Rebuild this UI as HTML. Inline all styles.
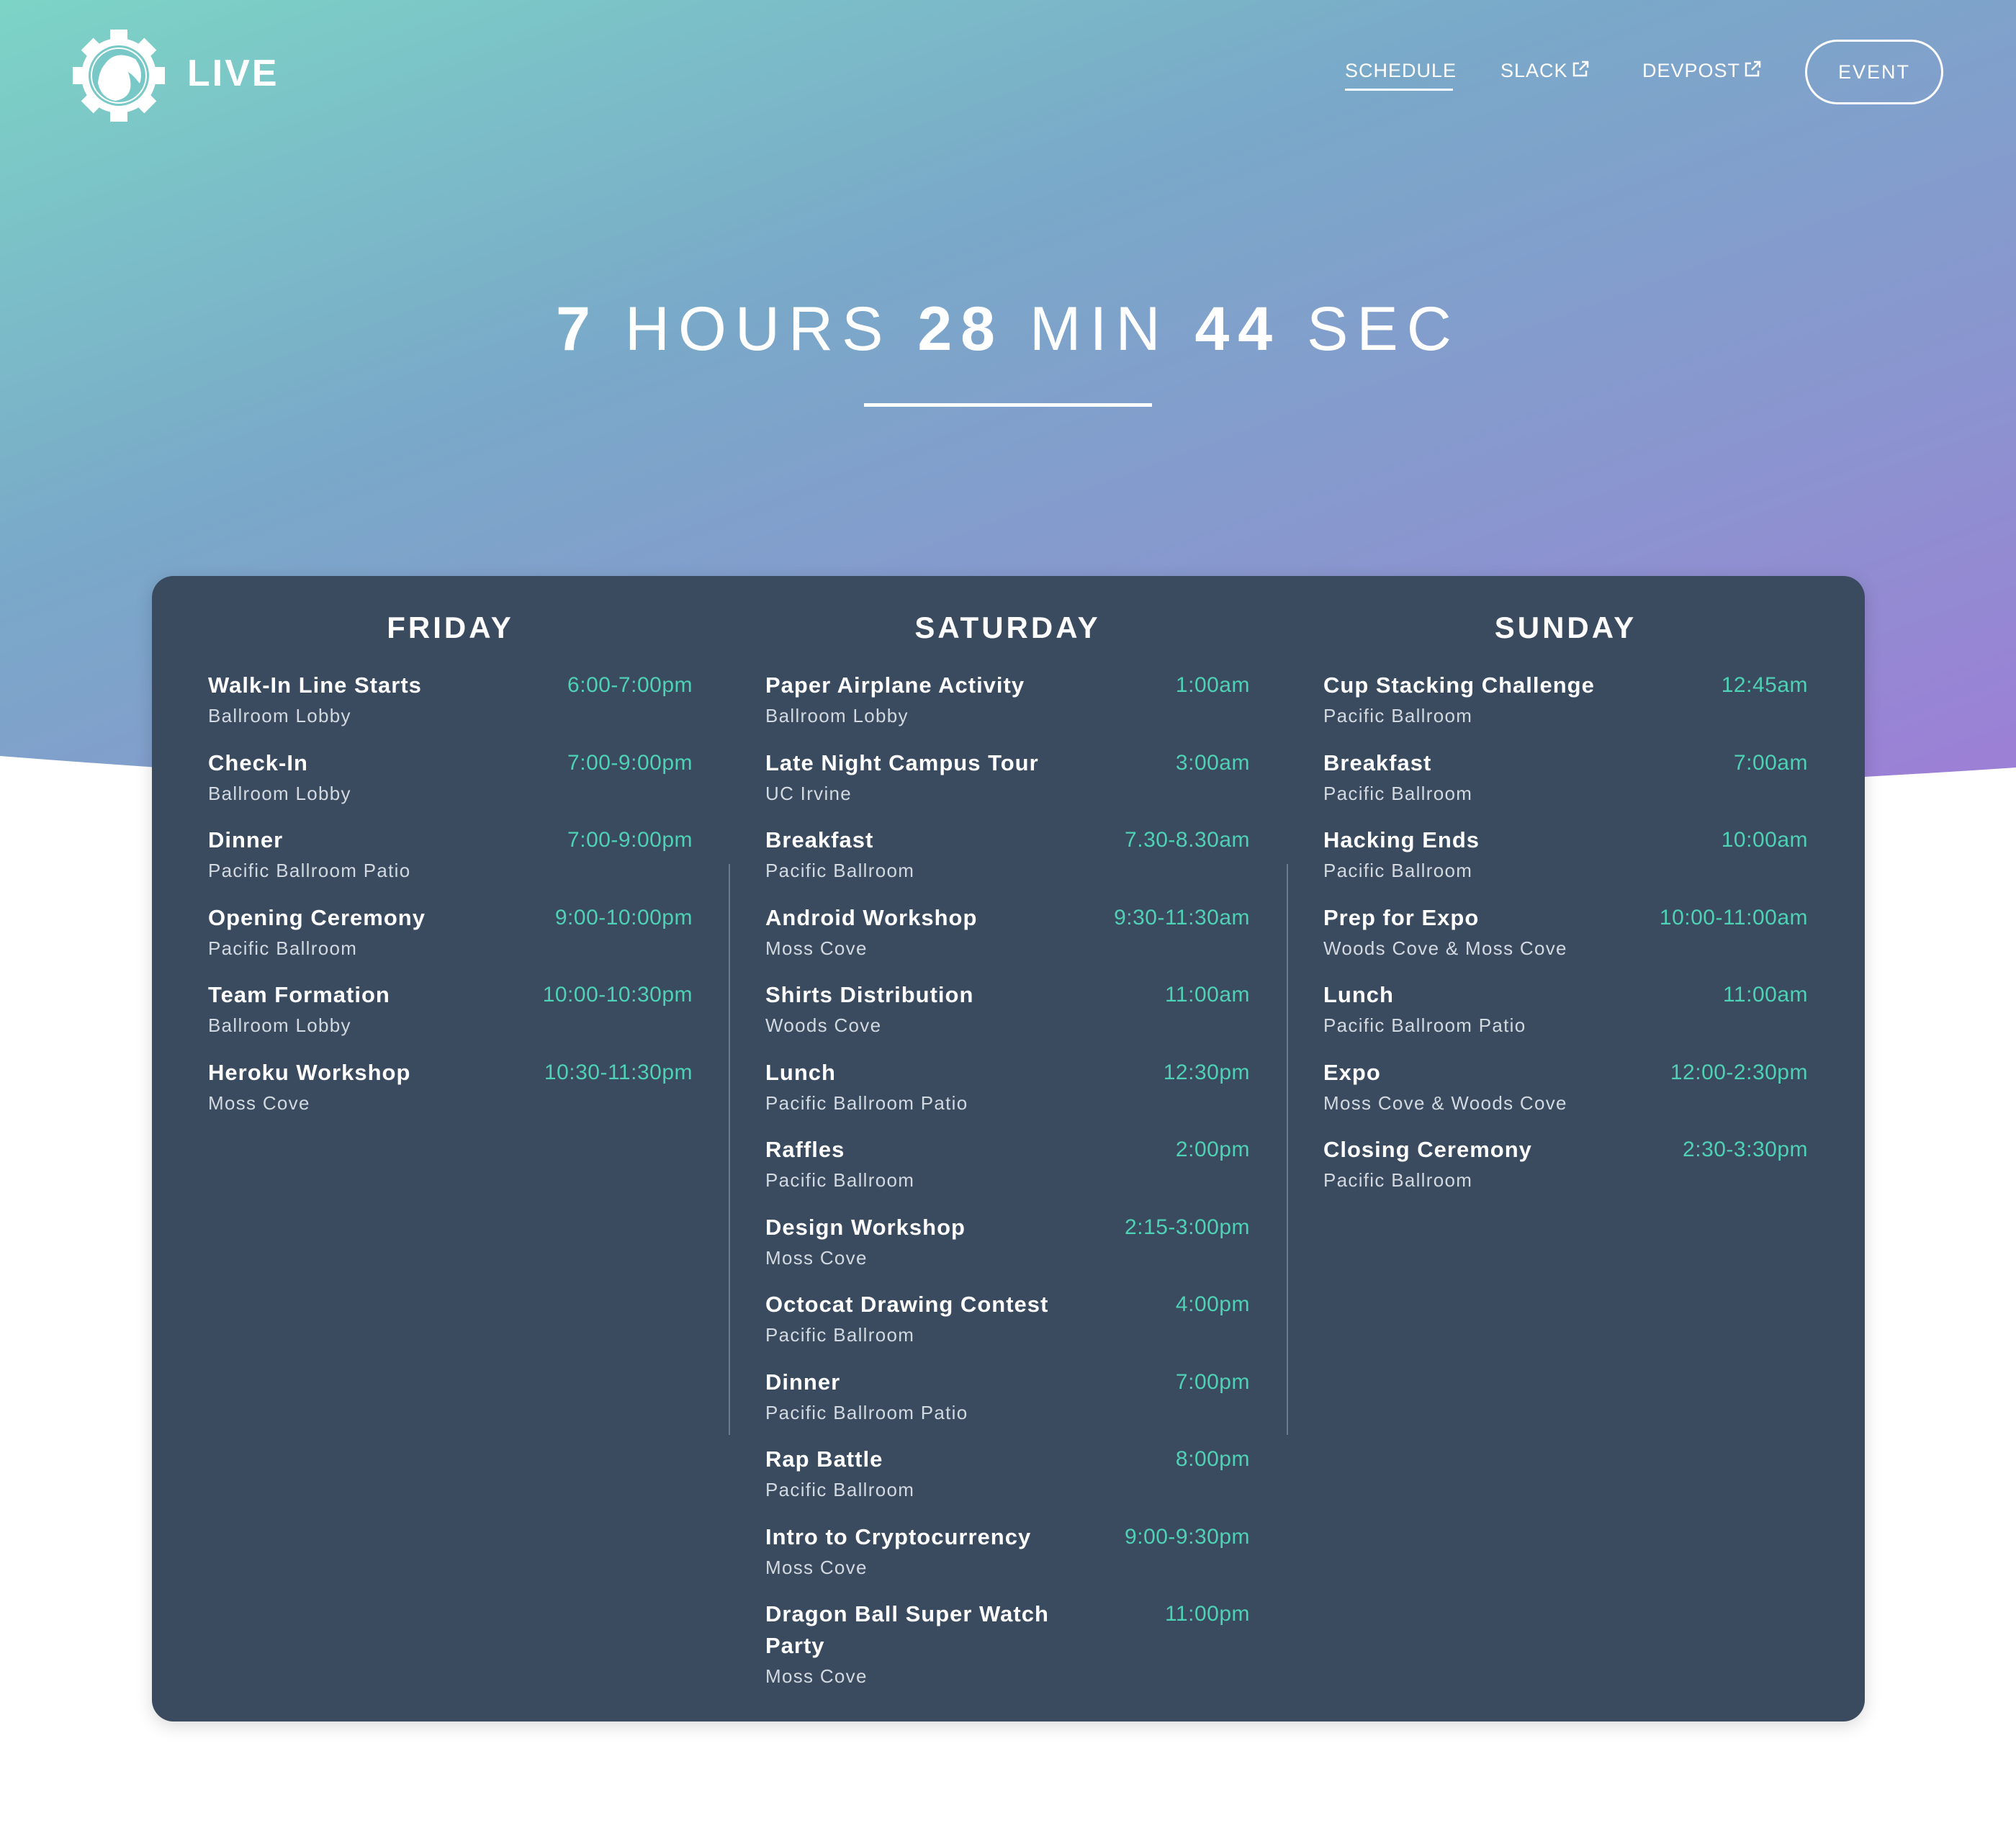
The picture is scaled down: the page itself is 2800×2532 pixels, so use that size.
<!DOCTYPE html>
<html><head><meta charset="utf-8"><style>
*{margin:0;padding:0;box-sizing:border-box}
body{width:2800px;height:2532px;position:relative;overflow:hidden;background:#fff;font-family:"Liberation Sans",sans-serif;color:#fff}
.bg{position:absolute;left:0;top:0;width:2800px;height:1300px;background:linear-gradient(160deg,#7cd4c6 0%,#7aa8c9 35%,#8a95cf 65%,#a476d9 100%)}
svg.curve{position:absolute;left:0;top:0}
.logo{position:absolute;left:100px;top:40px}
.live{position:absolute;left:260px;top:72px;font-size:52px;font-weight:bold;letter-spacing:3px;line-height:60px}
.nav{position:absolute;top:82px;font-size:27px;letter-spacing:1px;line-height:32px}
.nav svg{vertical-align:-2px;margin-left:4px}
.ul{position:absolute;left:1868px;top:123px;width:150px;height:3px;background:#fff}
.btn{position:absolute;left:2507px;top:55px;width:192px;height:90px;border:3px solid #fff;border-radius:45px;font-size:27px;letter-spacing:2px;text-align:center;line-height:84px}
.count{position:absolute;left:0;width:2800px;top:402px;text-align:center;font-size:86px;letter-spacing:12px;line-height:110px;font-weight:300}
.count b{font-weight:bold}
.hr{position:absolute;left:1200px;top:560px;width:400px;height:5px;background:#fff}
.card{position:absolute;left:211px;top:800px;width:2379px;height:1591px;background:#3a4a5f;border-radius:30px;box-shadow:0 6px 24px rgba(0,0,0,.15)}
.col{position:absolute;top:0;width:673px}
.col h2{text-align:center;font-size:42px;letter-spacing:4px;font-weight:bold;margin-top:50px;line-height:44px;height:80px}
.it{position:relative;height:107.5px}
.t{font-size:31px;font-weight:bold;letter-spacing:1px;line-height:44px;width:450px}
.l{font-size:26px;color:#d3d9e0;letter-spacing:1.3px;line-height:40px}
.tm{position:absolute;right:0;top:0;font-size:30px;color:#4fd1b5;line-height:44px;white-space:nowrap;letter-spacing:.5px}
.div{position:absolute;top:400px;width:2px;height:793px;background:#6b7a8c}
</style></head><body>
<div class="bg"></div>
<svg class="curve" width="2800" height="2532"><path d="M0 1050 Q1400 1160 2800 1066 L2800 2532 L0 2532 Z" fill="#fff"/></svg>
<svg class="logo" width="130" height="130" viewBox="0 0 130 130">
<g fill="#fff" transform="translate(65,65)">
<rect x="-12" y="-64" width="24" height="18"/><rect x="-12" y="46" width="24" height="18"/>
<rect x="-64" y="-12" width="18" height="24"/><rect x="46" y="-12" width="18" height="24"/>
<g transform="rotate(45)"><rect x="-12" y="-62" width="24" height="18"/><rect x="-12" y="44" width="24" height="18"/><rect x="-62" y="-12" width="18" height="24"/><rect x="44" y="-12" width="18" height="24"/></g>
<circle r="52"/>
</g>
<circle cx="65" cy="65" r="42" fill="#79c8c8"/>
<circle cx="65" cy="65" r="38" fill="none" stroke="#fff" stroke-width="2"/>
<path d="M45 50 Q60 28 88 42 Q100 58 94 76 Q85 64 78 60 Q90 95 60 100 Q40 96 36 75 Q38 58 45 50 Z" fill="#fff"/>
</svg>
<div class="live">LIVE</div>
<div class="nav" style="left:1868px">SCHEDULE</div><div class="ul"></div>
<div class="nav" style="left:2084px">SLACK<svg width="26" height="26" viewBox="0 0 26 26" fill="none" stroke="#fff" stroke-width="2.5"><path d="M11 5H4v17h17v-7"/><path d="M15 3h8v8M23 3L12 14"/></svg></div>
<div class="nav" style="left:2281px">DEVPOST<svg width="26" height="26" viewBox="0 0 26 26" fill="none" stroke="#fff" stroke-width="2.5"><path d="M11 5H4v17h17v-7"/><path d="M15 3h8v8M23 3L12 14"/></svg></div>
<div class="btn">EVENT</div>
<div class="count"><b>7</b> HOURS <b>28</b> MIN <b>44</b> SEC</div>
<div class="hr"></div>
<div class="card">
<div class="div" style="left:801px"></div><div class="div" style="left:1576px"></div>
<div class="col" style="left:78px"><h2>FRIDAY</h2>
<div class="it"><div class="t">Walk-In Line Starts</div><div class="l">Ballroom Lobby</div><div class="tm">6:00-7:00pm</div></div>
<div class="it"><div class="t">Check-In</div><div class="l">Ballroom Lobby</div><div class="tm">7:00-9:00pm</div></div>
<div class="it"><div class="t">Dinner</div><div class="l">Pacific Ballroom Patio</div><div class="tm">7:00-9:00pm</div></div>
<div class="it"><div class="t">Opening Ceremony</div><div class="l">Pacific Ballroom</div><div class="tm">9:00-10:00pm</div></div>
<div class="it"><div class="t">Team Formation</div><div class="l">Ballroom Lobby</div><div class="tm">10:00-10:30pm</div></div>
<div class="it"><div class="t">Heroku Workshop</div><div class="l">Moss Cove</div><div class="tm">10:30-11:30pm</div></div>
</div>
<div class="col" style="left:852px"><h2>SATURDAY</h2>
<div class="it"><div class="t">Paper Airplane Activity</div><div class="l">Ballroom Lobby</div><div class="tm">1:00am</div></div>
<div class="it"><div class="t">Late Night Campus Tour</div><div class="l">UC Irvine</div><div class="tm">3:00am</div></div>
<div class="it"><div class="t">Breakfast</div><div class="l">Pacific Ballroom</div><div class="tm">7.30-8.30am</div></div>
<div class="it"><div class="t">Android Workshop</div><div class="l">Moss Cove</div><div class="tm">9:30-11:30am</div></div>
<div class="it"><div class="t">Shirts Distribution</div><div class="l">Woods Cove</div><div class="tm">11:00am</div></div>
<div class="it"><div class="t">Lunch</div><div class="l">Pacific Ballroom Patio</div><div class="tm">12:30pm</div></div>
<div class="it"><div class="t">Raffles</div><div class="l">Pacific Ballroom</div><div class="tm">2:00pm</div></div>
<div class="it"><div class="t">Design Workshop</div><div class="l">Moss Cove</div><div class="tm">2:15-3:00pm</div></div>
<div class="it"><div class="t">Octocat Drawing Contest</div><div class="l">Pacific Ballroom</div><div class="tm">4:00pm</div></div>
<div class="it"><div class="t">Dinner</div><div class="l">Pacific Ballroom Patio</div><div class="tm">7:00pm</div></div>
<div class="it"><div class="t">Rap Battle</div><div class="l">Pacific Ballroom</div><div class="tm">8:00pm</div></div>
<div class="it"><div class="t">Intro to Cryptocurrency</div><div class="l">Moss Cove</div><div class="tm">9:00-9:30pm</div></div>
<div class="it"><div class="t" style="width:430px">Dragon Ball Super Watch Party</div><div class="l">Moss Cove</div><div class="tm">11:00pm</div></div>
</div>
<div class="col" style="left:1627px"><h2>SUNDAY</h2>
<div class="it"><div class="t">Cup Stacking Challenge</div><div class="l">Pacific Ballroom</div><div class="tm">12:45am</div></div>
<div class="it"><div class="t">Breakfast</div><div class="l">Pacific Ballroom</div><div class="tm">7:00am</div></div>
<div class="it"><div class="t">Hacking Ends</div><div class="l">Pacific Ballroom</div><div class="tm">10:00am</div></div>
<div class="it"><div class="t">Prep for Expo</div><div class="l">Woods Cove &amp; Moss Cove</div><div class="tm">10:00-11:00am</div></div>
<div class="it"><div class="t">Lunch</div><div class="l">Pacific Ballroom Patio</div><div class="tm">11:00am</div></div>
<div class="it"><div class="t">Expo</div><div class="l">Moss Cove &amp; Woods Cove</div><div class="tm">12:00-2:30pm</div></div>
<div class="it"><div class="t">Closing Ceremony</div><div class="l">Pacific Ballroom</div><div class="tm">2:30-3:30pm</div></div>
</div>
</div>
</body></html>
